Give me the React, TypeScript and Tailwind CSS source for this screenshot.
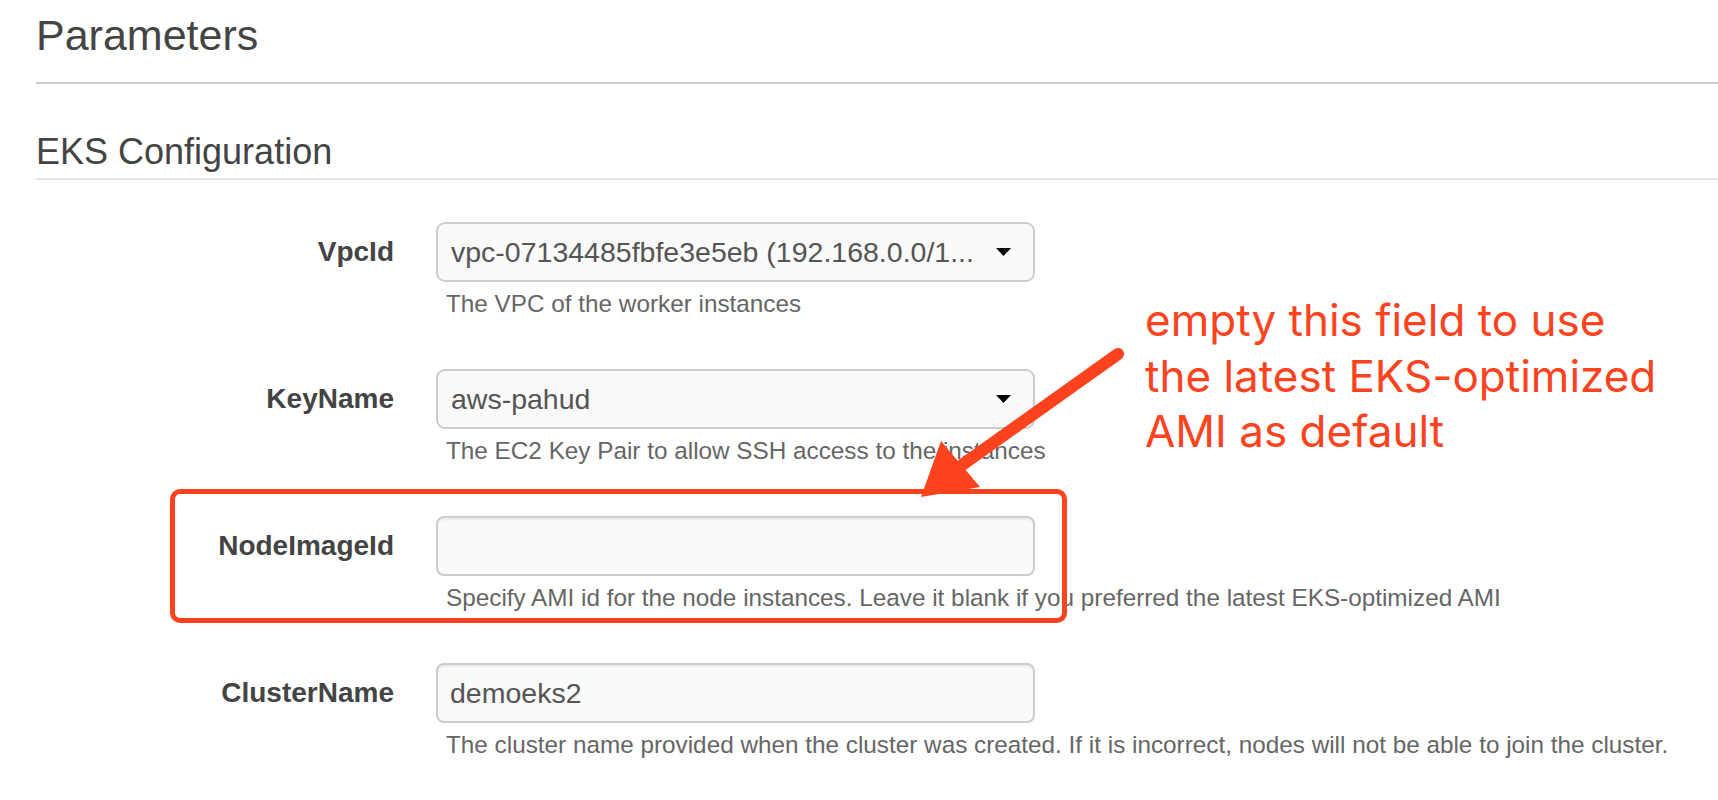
import React from 'react';

type Field = {
  label: string;
  kind: 'select' | 'input';
  value: string;
  help: string;
  highlight?: boolean;
};

const fields: Field[] = [
  {
    label: 'VpcId',
    kind: 'select',
    value: 'vpc-07134485fbfe3e5eb (192.168.0.0/1...',
    help: 'The VPC of the worker instances',
  },
  {
    label: 'KeyName',
    kind: 'select',
    value: 'aws-pahud',
    help: 'The EC2 Key Pair to allow SSH access to the instances',
  },
  {
    label: 'NodeImageId',
    kind: 'input',
    value: '',
    help: 'Specify AMI id for the node instances. Leave it blank if you preferred the latest EKS-optimized AMI',
    highlight: true,
  },
  {
    label: 'ClusterName',
    kind: 'input',
    value: 'demoeks2',
    help: 'The cluster name provided when the cluster was created. If it is incorrect, nodes will not be able to join the cluster.',
  },
];

function FieldRow({ field }: { field: Field }) {
  return (
    <div className="relative flex gap-[42px]">
      {/* Label */}
      <div className="w-[358px] h-[60px] flex items-center justify-end text-[28px] font-bold text-[#444]">
        {field.label}
      </div>

      {/* Control + help */}
      <div>
        {field.kind === 'select' ? (
          <div className="w-[599px] h-[60px] flex items-center justify-between pl-[13px] pr-[22px] border-2 border-[#cccccc] rounded-[9px] bg-[#fafafa] text-[28.5px] text-[#555]">
            <span className="whitespace-nowrap">{field.value}</span>
            <svg width="15" height="8" viewBox="0 0 15 8">
              <polygon points="0,0 15,0 7.5,8" fill="#000" />
            </svg>
          </div>
        ) : (
          <div className="w-[599px] h-[60px] flex items-center pl-[12px] border-2 border-[#cccccc] rounded-[8px] bg-[#fafafa] shadow-[inset_0_2px_2px_rgba(0,0,0,0.06)] text-[28.5px] text-[#555]">
            {field.value}
          </div>
        )}
        <p className="mt-[8px] pl-[10px] text-[24.3px] leading-[28px] text-[#666] whitespace-nowrap">
          {field.help}
        </p>
      </div>

      {/* Red annotation frame */}
      {field.highlight && (
        <div className="absolute top-[-27px] left-[134px] w-[897px] h-[134px] border-[5px] border-[#fc431e] rounded-[10px] pointer-events-none" />
      )}
    </div>
  );
}

export default function App() {
  return (
    <div className="relative w-full h-[800px] overflow-hidden bg-white pl-[36px] font-['Liberation_Sans',Arial,sans-serif]">
      {/* Page heading */}
      <div className="pt-[10px] pb-[22px] border-b-2 border-[#cccccc]">
        <h1 className="text-[43px] leading-[50px] text-[#444]">Parameters</h1>
      </div>

      {/* Section heading */}
      <div className="mt-[48px] pb-[6px] border-b-2 border-[#e5e5e5]">
        <h2 className="text-[36px] leading-[40px] text-[#444]">EKS Configuration</h2>
      </div>

      {/* Fields */}
      <div className="mt-[42px] flex flex-col gap-[51px]">
        {fields.map((f) => (
          <FieldRow key={f.label} field={f} />
        ))}
      </div>

      {/* Annotation note */}
      <div className="absolute left-[1145px] top-[293px] font-['Inter',sans-serif] text-[44px] leading-[55.5px] text-[#fc431e]">
        <p>empty this field to use</p>
        <p>the latest EKS-optimized</p>
        <p>AMI as default</p>
      </div>

      {/* Annotation arrow */}
      <svg
        className="absolute left-0 top-0 pointer-events-none"
        width="1718"
        height="800"
        viewBox="0 0 1718 800"
      >
        <line x1="1118" y1="354" x2="962" y2="465" stroke="#fc431e" strokeWidth="12" strokeLinecap="round" />
        <polygon points="921,497 941,441 980,487" fill="#fc431e" />
      </svg>
    </div>
  );
}
